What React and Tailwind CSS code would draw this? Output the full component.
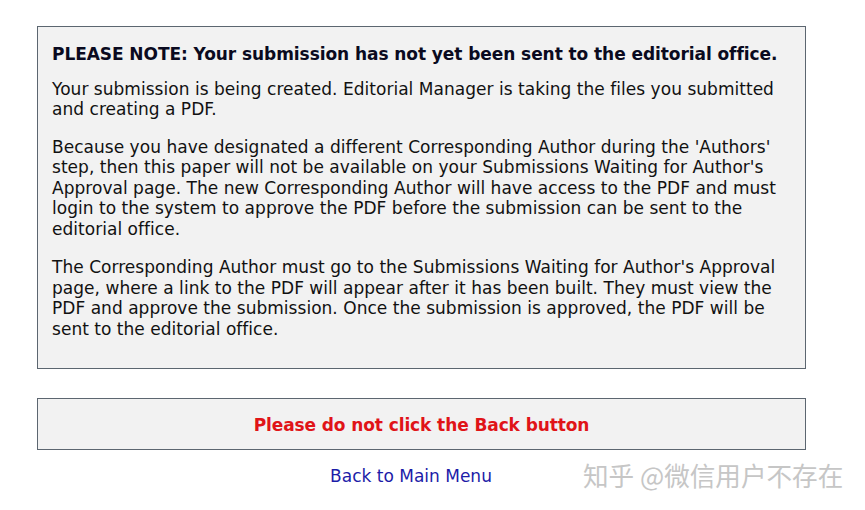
export default function App() {
  return (
    <div className="w-[865px] h-[510px] bg-white font-['DejaVu_Sans',Verdana,sans-serif] text-[17px] leading-[20.55px] text-[#111]">
      <div className="pt-[26px] pl-[37px] w-[806px]">
        <div className="border border-[#5c6670] bg-[#f2f2f2] px-[14px] pt-[17px] pb-[28px]">
          <p className="font-bold text-[#0a0a20] tracking-[-0.07px]">
            PLEASE NOTE: Your submission has not yet been sent to the editorial office.
          </p>
          <p className="mt-[14px] tracking-[0.03px]">
            Your submission is being created. Editorial Manager is taking the files you submitted and creating a PDF.
          </p>
          <p className="mt-[17px] tracking-[0.03px]">
            Because you have designated a different Corresponding Author during the 'Authors' step, then this paper will not be available on your Submissions Waiting for Author's Approval page. The new Corresponding Author will have access to the PDF and must login to the system to approve the PDF before the submission can be sent to the editorial office.
          </p>
          <p className="mt-[18px] tracking-[0.03px]">
            The Corresponding Author must go to the Submissions Waiting for Author's Approval page, where a link to the PDF will appear after it has been built. They must view the PDF and approve the submission. Once the submission is approved, the PDF will be sent to the editorial office.
          </p>
        </div>

        <div className="mt-[29px] h-[52px] border border-[#5c6670] bg-[#f2f2f2] pt-[3px] flex items-center justify-center">
          <span className="font-bold text-[#e01418] tracking-[-0.1px]">Please do not click the Back button</span>
        </div>
      </div>

      <div className="relative mt-[16px]">
        <div className="flex justify-center w-[822px]">
          <a href="#" className="text-[#1c1ca8]">Back to Main Menu</a>
        </div>
        <div className="absolute left-[583px] top-[-7px] text-[25.6px] leading-[32px] text-[#c6c6c6] font-['Noto_Sans_CJK_SC',sans-serif]">
          知乎 @微信用户不存在
        </div>
      </div>
    </div>
  );
}
